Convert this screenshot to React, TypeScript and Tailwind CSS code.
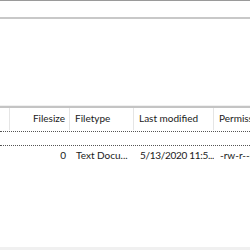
import React from "react";

export default function App() {
  const font = { fontFamily: 'Lato, "Noto Sans", "Liberation Sans", sans-serif' };
  return (
    <div className="w-[250px] h-[250px] bg-white flex flex-col overflow-hidden text-[10px] text-[#1a1a1a]" style={font}>
      <div className="h-px bg-[#9a9a9a]" />
      <div className="h-[16px]" />
      <div className="h-[2px] bg-[#c8c8c8]" />
      <div className="h-[86px]" />
      <div className="h-px bg-[#f0f0f0]" />
      <div className="h-[2px] bg-[#c4c4c4]" />
      <div className="flex h-[22px] items-center leading-none whitespace-nowrap">
        <div className="w-[10px] h-full border-r border-[#e5e5e5]" />
        <div className="w-[60px] h-full border-r border-[#e5e5e5] flex items-center justify-end pr-[4px] pb-[2px]">Filesize</div>
        <div className="w-[64px] h-full border-r border-[#e5e5e5] flex items-center pl-[5px] pb-[2px]">Filetype</div>
        <div className="w-[80px] h-full border-r border-[#e5e5e5] flex items-center pl-[5px] pb-[2px]">Last modified</div>
        <div className="flex-1 h-full flex items-center pl-[5px] pb-[2px] overflow-hidden">Permissions</div>
      </div>
      <div className="h-px" />
      <div className="h-[15px] border-y border-dotted border-[#555]" />
      <div className="flex h-[18px] items-center leading-none whitespace-nowrap">
        <div className="w-[70px] text-right pr-[4px]">0</div>
        <div className="w-[64px] pl-[6px] overflow-hidden">Text Docu...</div>
        <div className="w-[80px] pl-[6px] overflow-hidden tracking-[-0.3px]">5/13/2020 11:5...</div>
        <div className="flex-1 pl-[6px] overflow-hidden">-rw-r--r--</div>
      </div>
      <div className="flex-1" />
      <div className="h-[3px] bg-[#f0f0f0]" />
    </div>
  );
}
